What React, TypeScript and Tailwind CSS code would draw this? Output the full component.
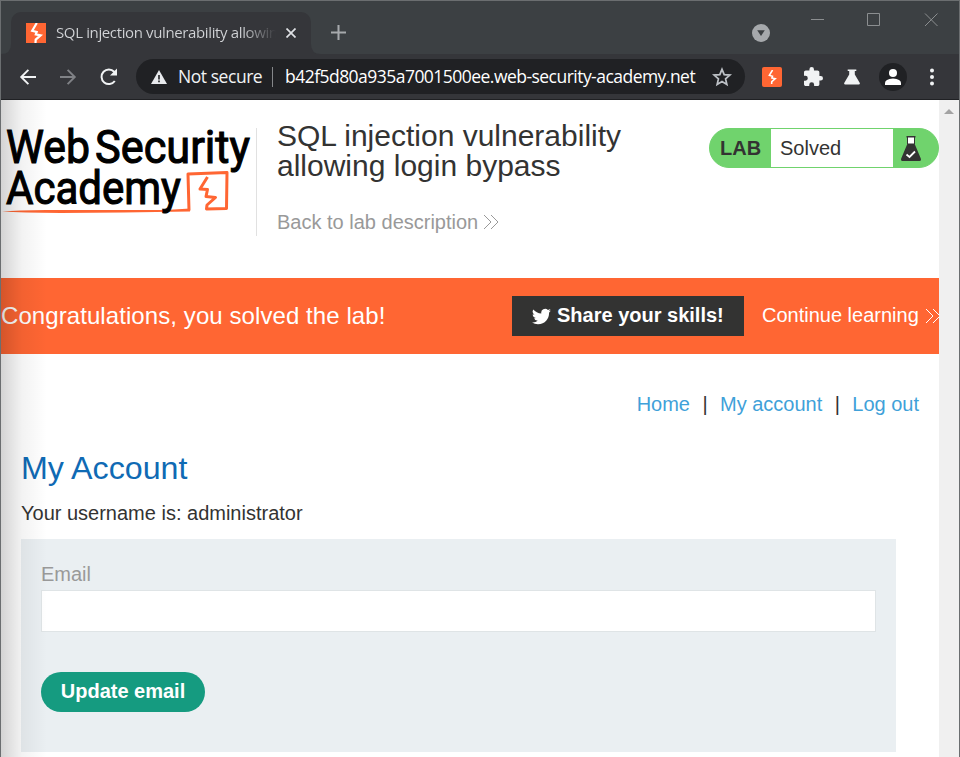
import React from "react";

const CHROME_FONT = "font-['Open_Sans','Noto_Sans',sans-serif]";

function Bolt({ className }: { className: string }) {
  return (
    <svg viewBox="0 0 20 20" className={className} fill="none" stroke="#fff" strokeWidth="2.2">
      <path d="M10.8 0L6.2 7.700L10.700 8.900L9.800 11.400L14.600 12.400L9.700 16.600L9.500 20" />
    </svg>
  );
}

function Chevrons({ className }: { className: string }) {
  return (
    <svg viewBox="0 0 16 16" className={className} fill="none" stroke="currentColor" strokeWidth="1">
      <path d="M1 1L8 8L1 15M8 1L15 8L8 15" />
    </svg>
  );
}

function TabStrip() {
  return (
    <div className="flex h-[53px] bg-[#3c4043]">
      <div className="flex w-[10px] items-end">
        <svg viewBox="0 0 10 10" className="size-[10px]">
          <path d="M10 0V10H0Q10 10 10 0Z" fill="#35363a" />
        </svg>
      </div>
      <div className="mt-[11px] flex h-[42px] w-[300px] items-center rounded-t-[10px] bg-[#35363a] pl-[15px]">
        <div className="size-5 bg-[#ff6633]">
          <Bolt className="size-5" />
        </div>
        <div
          className={`${CHROME_FONT} -mt-[2px] ml-[10px] w-[220px] overflow-hidden bg-gradient-to-r from-[#d2d4d7] from-85% to-[#35363a] bg-clip-text text-[15px] tracking-[-0.37px] whitespace-nowrap text-transparent`}
        >
          SQL injection vulnerability allowing
        </div>
        <svg viewBox="0 0 10 10" className="ml-[10px] size-[10px]" stroke="#dfe1e5" strokeWidth="1.7">
          <path d="M0.5 0.5L9.5 9.5M9.5 0.5L0.5 9.5" />
        </svg>
      </div>
      <div className="flex w-[10px] items-end">
        <svg viewBox="0 0 10 10" className="size-[10px]">
          <path d="M0 0V10H10Q0 10 0 0Z" fill="#35363a" />
        </svg>
      </div>
      <svg viewBox="0 0 14 14" className="mt-[24px] ml-[10px] size-[15px]" stroke="#a6a9ac" strokeWidth="1.9">
        <path d="M7 0V14M0 7H14" />
      </svg>
      <svg viewBox="0 0 18 18" className="mt-[23px] ml-[406px] size-[18px]">
        <circle cx="9" cy="9" r="9" fill="#a6a9ac" />
        <path d="M5.2 6.3H12.8L9 12Z" fill="#3c4043" />
      </svg>
      <svg viewBox="0 0 128 14" className="mt-[12px] ml-[41px] h-[14px] w-[128px]" fill="none" stroke="#8b8e90" strokeWidth="1">
        <path d="M0 6.5H13M56.5 0.5H68.5V12.5H56.5ZM114 0.5L126.5 13M126.5 0.5L114 13" />
      </svg>
    </div>
  );
}

function Toolbar() {
  return (
    <div className="flex h-[46px] items-center border-b border-[#202124] bg-[#35363a]">
      <svg viewBox="0 0 18 18" className="ml-[18px] size-[18px]" fill="none" stroke="#f1f3f4" strokeWidth="1.9">
        <path d="M17 9H2.5M9.4 1.8L2.2 9L9.4 16.2" />
      </svg>
      <svg viewBox="0 0 18 18" className="ml-[22px] size-[18px]" fill="none" stroke="#808286" strokeWidth="1.9">
        <path d="M1 9H15.5M8.6 1.8L15.8 9L8.6 16.2" />
      </svg>
      <svg viewBox="0 0 20 20" className="ml-[22px] size-5">
        <path d="M15.8 14A7.3 7.3 0 1 1 15.2 4.8L17 6.6" fill="none" stroke="#f1f3f4" strokeWidth="2" />
        <path d="M18 1.5V8.500H11Z" fill="#f1f3f4" />
      </svg>
      <div className={`${CHROME_FONT} ml-[17px] flex h-[35px] w-[609px] items-center rounded-full bg-[#202124] text-[17.5px]`}>
        <svg viewBox="0 0 16 14" className="ml-[15px] h-[14px] w-4">
          <path d="M8 0L16 14H0Z" fill="#e8eaed" />
          <path d="M7.2 5H8.8V9.4H7.2ZM7.2 10.6H8.8V12.2H7.2Z" fill="#202124" />
        </svg>
        <span className="ml-[11px] w-[86px] tracking-[-0.45px] whitespace-nowrap text-[#f1f3f4]">Not secure</span>
        <span className="ml-[8px] h-5 w-px bg-[#85878a]" />
        <span className="ml-[12px] w-[413px] tracking-[-0.53px] whitespace-nowrap text-white">
          b42f5d80a935a7001500ee.web-security-academy.net
        </span>
        <svg viewBox="0 0 24 24" className="ml-[13px] size-[22px]" fill="none" stroke="#bdc1c6" strokeWidth="1.9" strokeLinejoin="miter">
          <path d="M12 3.6L14.4 9.4L20.6 9.9L15.9 14L17.3 20.1L12 16.9L6.7 20.1L8.1 14L3.4 9.9L9.6 9.4Z" />
        </svg>
      </div>
      <div className="ml-[17px] size-5 rounded-[2px] bg-[#ff6633] p-[3px]">
        <Bolt className="size-[14px]" />
      </div>
      <svg viewBox="2 1 21 21" className="ml-[22px] size-[19px]" fill="#f1f3f4">
        <path d="M20.5 11H19V7c0-1.1-.9-2-2-2h-4V3.5a2.5 2.5 0 0 0-5 0V5H4c-1.1 0-2 .9-2 2v3.8h1.5a2.7 2.7 0 0 1 0 5.4H2V20c0 1.100.9 2 2 2h3.800v-1.500a2.700 2.700 0 0 1 5.400 0V22H17c1.100 0 2-.9 2-2v-4h1.500a2.500 2.500 0 0 0 0-5z" />
      </svg>
      <svg viewBox="0 0 16 16" className="ml-[21px] size-4" fill="#f1f3f4">
        <path d="M3.700 0.500H12.300V2H10.800V5.500L15.800 14Q16.200 15.500 14.700 15.500H1.300Q-0.200 15.500 0.200 14L5.200 5.500V2H3.700Z" />
      </svg>
      <svg viewBox="0 0 28 28" className="ml-[19px] size-7">
        <circle cx="14" cy="14" r="14" fill="#202124" />
        <circle cx="14" cy="10" r="4" fill="#fff" />
        <path d="M6 22V20Q6 16 14 15.500Q22 16 22 20V22Z" fill="#fff" />
      </svg>
      <svg viewBox="0 0 4 18" className="ml-[23px] h-[18px] w-1" fill="#f1f3f4">
        <circle cx="2" cy="2.500" r="2" />
        <circle cx="2" cy="9" r="2" />
        <circle cx="2" cy="15.500" r="2" />
      </svg>
    </div>
  );
}

function AcademyLogo() {
  return (
    <svg viewBox="0 0 250 108" className="h-[108px] w-[250px] shrink-0 overflow-visible">
      <path
        d="M188 82.500L187 46L226 44.500L225.500 80.500L205.500 81L206 77L214.500 69.500L205 68.500L206.500 61.500L199 61L206.500 49"
        fill="none"
        stroke="#ff6633"
        strokeWidth="3"
        strokeLinejoin="round"
      />
      <path d="M1 83.500Q20 81.500 60 82H165L189 80.500V83.500Q120 84.500 60 85Q20 84.500 1 83.500Z" fill="#ff6633" />
      <g className="font-['Roboto',sans-serif]" fontSize="46" fontWeight="400" fill="#000" stroke="#000" strokeWidth="1.100">
        <text x="5" y="35" textLength="84" lengthAdjust="spacingAndGlyphs">Web</text>
        <text x="94" y="35" textLength="155" lengthAdjust="spacingAndGlyphs">Security</text>
        <text x="5" y="76" textLength="175" lengthAdjust="spacingAndGlyphs">Academy</text>
      </g>
    </svg>
  );
}

function LabStatus() {
  return (
    <div className="mt-[28px] flex h-10 w-[230px] overflow-hidden rounded-full border border-[#70d36d] bg-[#70d36d] text-[20px] text-[#333332]">
      <div className="flex w-[61px] items-center pl-[10px] font-bold">LAB</div>
      <div className="flex w-[122px] items-center bg-white pl-[9px]">Solved</div>
      <div className="flex flex-1 pt-[7px] pl-[7px]">
        <svg viewBox="0 0 22 26" className="h-[26px] w-[22px]">
          <path d="M8 1H14V8H8Z" fill="#fff" />
          <path d="M6.500 0H15.500V1.500H6.500ZM7.500 7.500H14.500L20.800 22.500Q21.500 25 19.500 25H2.500Q0.500 25 1.200 22.500Z" fill="#333332" />
          <path d="M7.500 1V8M14.500 1V8" stroke="#333332" />
          <path d="M6.500 18.500L9.500 21L15 15.500" fill="none" stroke="#fff" strokeWidth="1.800" />
        </svg>
      </div>
    </div>
  );
}

function PageHeader() {
  return (
    <header className="flex h-[178px]">
      <div className="mt-[28px] flex h-[108px] w-[256px] border-r border-[#e1e1e1]">
        <AcademyLogo />
      </div>
      <div className="w-[432px] pt-[21px] pl-[20px]">
        <h2 className="w-[360px] text-[30px] leading-[30px] text-[#333332]">
          SQL injection vulnerability allowing login bypass
        </h2>
        <a className="mt-[26px] flex items-center text-[20px] leading-[30px] whitespace-nowrap text-[#999]">
          Back to lab description
          <Chevrons className="ml-[5px] size-4" />
        </a>
      </div>
      <div className="ml-[20px]">
        <LabStatus />
      </div>
    </header>
  );
}

function SolvedBanner() {
  return (
    <section className="flex h-[76px] items-center bg-[#ff6633] text-white">
      <p className="w-[511px] text-[24px] tracking-[0.080px] whitespace-nowrap">Congratulations, you solved the lab!</p>
      <button className="flex h-10 w-[232px] items-center bg-[#333332] pl-[20px] text-[20px] font-bold whitespace-nowrap">
        <svg viewBox="0 2 24 20" className="mr-[6px] h-[17px] w-[19px]" fill="#fff">
          <path d="M23.950 4.570a10 10 0 0 1-2.820.770 4.960 4.960 0 0 0 2.160-2.720c-.95.550-2 .95-3.130 1.180a4.920 4.920 0 0 0-8.380 4.480C7.690 8.090 4.070 6.130 1.640 3.160a4.900 4.900 0 0 0 1.520 6.570 4.900 4.900 0 0 1-2.230-.61v.06a4.920 4.920 0 0 0 3.950 4.830 5 5 0 0 1-2.210.08 4.940 4.940 0 0 0 4.600 3.420A9.870 9.870 0 0 1 0 19.540a14 14 0 0 0 7.550 2.210c9.050 0 14-7.500 14-13.980 0-.21 0-.42-.02-.63a9.940 9.940 0 0 0 2.420-2.570z" />
        </svg>
        <span className="-mt-[3px]">Share your skills!</span>
      </button>
      <a className="ml-[18px] flex w-[177px] items-center overflow-hidden text-[20px] whitespace-nowrap">
        <span className="-mt-[1px] pb-[2px]">Continue learning</span>
        <Chevrons className="ml-[6px] size-4 shrink-0" />
      </a>
    </section>
  );
}

function AccountContent() {
  return (
    <main className="pl-[20px] text-[20px] text-[#333332]">
      <nav className="flex justify-end pt-[35px] pr-[20px] leading-[30px] text-[#3fa1d9]">
        <a>Home</a>
        <span className="w-[30px] text-center text-[#333332]">|</span>
        <a>My account</a>
        <span className="w-[30px] text-center text-[#333332]">|</span>
        <a>Log out</a>
      </nav>
      <h1 className="mt-[29px] text-[32.200px] leading-[40px] text-[#0f6ab4]">My Account</h1>
      <p className="mt-[10px] leading-[30px]">Your username is: administrator</p>
      <form className="mt-[11px] h-[213px] w-[875px] bg-[#eaeff2] px-[20px] pt-[20px]">
        <label className="block leading-[30px] text-[#999]">Email</label>
        <input className="mt-px block h-[42px] w-full border border-[#dfe4e6] bg-white" />
        <button type="button" className="mt-[40px] flex h-10 w-[164px] items-center justify-center rounded-full bg-[#159b80] pb-[2px] font-bold text-white">
          Update email
        </button>
      </form>
    </main>
  );
}

export default function App() {
  return (
    <div className="h-[757px] w-[960px] overflow-hidden border-x border-t border-[#6b6e70] bg-white font-['Liberation_Sans',Arial,sans-serif]">
      <TabStrip />
      <Toolbar />
      <div className="relative flex h-[657px]">
        <div className="w-[938px]">
          <PageHeader />
          <SolvedBanner />
          <AccountContent />
        </div>
        <div className="flex flex-1 justify-center bg-[#f0f0f0] pt-[9px]">
          <svg viewBox="0 0 10 5" className="h-[5px] w-[10px]">
            <path d="M0 5L5 0L10 5Z" fill="#a3a3a3" />
          </svg>
        </div>
        <div className="pointer-events-none absolute inset-y-0 left-0 w-[46px] bg-gradient-to-r from-black/17 via-black/5 via-45% to-transparent" />
      </div>
    </div>
  );
}
